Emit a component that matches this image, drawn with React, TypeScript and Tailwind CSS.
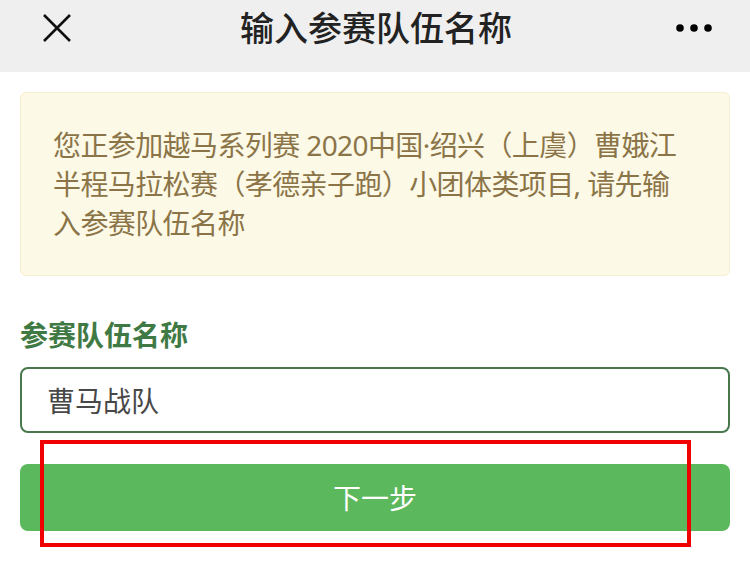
import React, { useState } from "react";

const App: React.FC = () => {
  const [teamName, setTeamName] = useState("曹马战队");

  return (
    <div
      className="relative w-[750px] h-[573px] bg-white overflow-hidden"
      style={{ fontFamily: '"Noto Sans", "Noto Sans CJK SC", sans-serif' }}
    >
      {/* Header */}
      <div className="h-[72px] bg-[#efefef] flex items-center pl-[42px] pr-[38px] pb-[16px]">
        <svg className="w-[30px] h-[30px]" viewBox="0 0 30 30" fill="none" stroke="#111" strokeWidth="2.6">
          <path d="M2 2L28 28M28 2L2 28" />
        </svg>
        <div className="flex-1 text-center text-[34px] leading-none text-[#222] font-medium pl-[4px]">输入参赛队伍名称</div>
        <svg className="w-[36px] h-[10px]" viewBox="0 0 36 10" fill="#000">
          <circle cx="4" cy="5" r="3.8" />
          <circle cx="18" cy="5" r="3.8" />
          <circle cx="32" cy="5" r="3.8" />
        </svg>
      </div>

      <div className="px-[20px] pt-[20px]">
        {/* Notice */}
        <div className="bg-[#fdf9e7] border border-[#f6eed0] rounded-[6px] pl-[32px] pr-[10px] pt-[33px] h-[184px]">
          <p className="text-[28px] leading-[39px] text-[#8b7548] tracking-[-0.6px]">
            您正参加越马系列赛 2020中国·绍兴（上虞）曹娥江
            <br />
            半程马拉松赛（孝德亲子跑）小团体类项目, 请先输
            <br />
            入参赛队伍名称
          </p>
        </div>

        {/* Label */}
        <div className="mt-[41px] text-[28px] leading-[36px] font-bold text-[#3f7a44]">参赛队伍名称</div>

        {/* Input */}
        <input
          value={teamName}
          onChange={(e) => setTeamName(e.target.value)}
          className="mt-[14px] w-full h-[66px] border-2 border-[#48784c] rounded-[8px] px-[25px] text-[28px] text-[#484848] outline-none bg-white"
        />

        {/* Button */}
        <button className="mt-[31px] w-full h-[67px] bg-[#5cb85c] rounded-[8px] text-white text-[28px] flex items-center justify-center">
          下一步
        </button>
      </div>

      {/* Red annotation box */}
      <div className="absolute left-[40px] top-[440px] w-[651px] h-[107px] border-[4px] border-[#f00000] pointer-events-none" />
    </div>
  );
};

export default App;
